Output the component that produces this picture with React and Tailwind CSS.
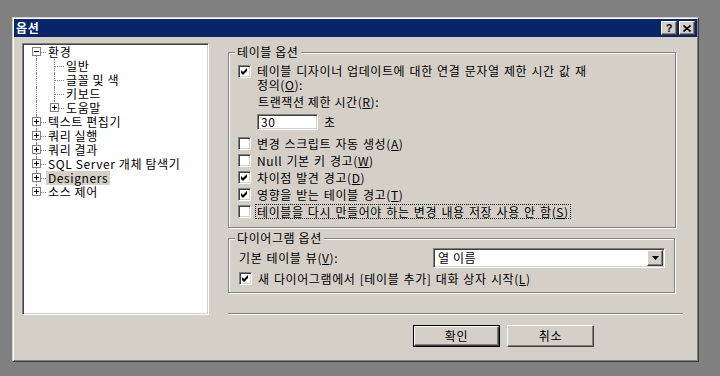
import React from 'react';

const font = "font-['Noto_Sans_CJK_KR','Noto_Sans_CJK_SC',sans-serif]";
const raised =
  'border border-t-white border-l-white border-r-[#404040] border-b-[#404040] shadow-[inset_-1px_-1px_0_#808080]';
const sunken =
  'border border-t-[#808080] border-l-[#808080] border-r-white border-b-white shadow-[inset_1px_1px_0_#404040,inset_-1px_-1px_0_#d4d0c8]';

const tree = [
  { t: '환경', lvl: 0, exp: '-', first: true },
  { t: '일반', lvl: 1 },
  { t: '글꼴 및 색', lvl: 1 },
  { t: '키보드', lvl: 1 },
  { t: '도움말', lvl: 1, exp: '+', lastChild: true },
  { t: '텍스트 편집기', lvl: 0, exp: '+' },
  { t: '쿼리 실행', lvl: 0, exp: '+' },
  { t: '쿼리 결과', lvl: 0, exp: '+' },
  { t: 'SQL Server 개체 탐색기', lvl: 0, exp: '+' },
  { t: 'Designers', lvl: 0, exp: '+', hl: true },
  { t: '소스 제어', lvl: 0, exp: '+', last: true },
];

function U({ children }) {
  return <span className="underline underline-offset-[1px]">{children}</span>;
}

function Expander({ sign, className }) {
  return (
    <div
      className={`absolute top-[2px] w-[9px] h-[9px] border border-[#808080] bg-white flex items-center justify-center ${className}`}
    >
      <svg width="5" height="5" viewBox="0 0 5 5">
        <rect x="0" y="2" width="5" height="1" fill="#000" />
        {sign === '+' && <rect x="2" y="0" width="1" height="5" fill="#000" />}
      </svg>
    </div>
  );
}

function TreeRow({ item }) {
  const { t, lvl, exp, first, last, lastChild, hl } = item;
  const v0 = first ? 'top-[7px] bottom-0' : last ? 'top-0 h-[7px]' : 'top-0 bottom-0';
  return (
    <div className={`relative h-[14px] leading-[14px] whitespace-nowrap ${lvl === 0 ? 'pl-[22px]' : 'pl-[40px]'}`}>
      <div className={`absolute left-[12px] w-0 border-l border-dotted border-[#808080] ${v0}`} />
      {lvl === 1 && (
        <div
          className={`absolute left-[30px] w-0 border-l border-dotted border-[#808080] ${
            lastChild ? 'top-0 h-[7px]' : 'top-0 bottom-0'
          }`}
        />
      )}
      <div
        className={`absolute top-[7px] w-[10px] h-0 border-t border-dotted border-[#808080] ${
          lvl === 0 ? 'left-[12px]' : 'left-[30px]'
        }`}
      />
      {exp && <Expander sign={exp} className={lvl === 0 ? 'left-[8px]' : 'left-[26px]'} />}
      <span className={`relative inline-block px-[2px] ${hl ? 'bg-[#d4d0c8]' : ''}`}>{t}</span>
    </div>
  );
}

function CheckBox({ checked, className = '' }) {
  return (
    <span className={`${sunken} bg-white w-[13px] h-[13px] shrink-0 flex items-center justify-center ${className}`}>
      {checked && (
        <svg width="7" height="7" viewBox="0 0 7 7">
          <path d="M0 2L2 4L6 0V3L2 7L0 5Z" fill="#000" />
        </svg>
      )}
    </span>
  );
}

function CheckRow({ checked, focus, pad = 'pl-[9px]', children }) {
  return (
    <div className={`h-[17px] flex items-center ${pad}`}>
      <CheckBox checked={checked} />
      <span
        className={`ml-[4px] px-[1px] leading-[13px] border ${
          focus ? 'border-dotted border-black' : 'border-transparent'
        }`}
      >
        {children}
      </span>
    </div>
  );
}

function Group({ title, className, children }) {
  return (
    <div className={`border border-[#808080] shadow-[inset_1px_1px_0_#fff,1px_1px_0_#fff] ${className}`}>
      <div className="-mt-[8px] ml-[6px] px-[2px] w-fit bg-[#d4d0c8] leading-[14px]">{title}</div>
      {children}
    </div>
  );
}

export default function App() {
  return (
    <div className={`w-[720px] h-[376px] bg-[#808080] pt-[17px] pl-[12px] text-[12px] tracking-[0.6px] text-black ${font}`}>
      <div className="w-[687px] h-[345px] bg-[#d4d0c8] border border-t-[#d4d0c8] border-l-[#d4d0c8] border-r-[#404040] border-b-[#404040] shadow-[inset_1px_1px_0_#fff,inset_-1px_-1px_0_#808080] p-[1px] flex flex-col">
        {/* title bar */}
        <div className="h-[18px] bg-[#0a246a] flex items-center justify-between pl-[2px] pr-[2px]">
          <span className="text-white font-bold leading-[14px]">옵션</span>
          <div className="flex gap-[2px]">
            <div className={`${raised} bg-[#d4d0c8] w-[16px] h-[14px] flex items-center justify-center`}>
              <span className="font-['Liberation_Sans',sans-serif] font-bold text-[11px] leading-[10px] tracking-normal">?</span>
            </div>
            <div className={`${raised} bg-[#d4d0c8] w-[16px] h-[14px] flex items-center justify-center`}>
              <svg width="8" height="7" viewBox="0 0 8 7">
                <path d="M0.5 0.5L7.5 6.5M7.5 0.5L0.5 6.5" stroke="#000" strokeWidth="1.6" />
              </svg>
            </div>
          </div>
        </div>

        {/* body */}
        <div className="flex">
          <div className={`${sunken} bg-white w-[187px] h-[272px] mt-[6px] ml-[8px] p-[1px]`}>
            {tree.map((item) => (
              <TreeRow key={item.t} item={item} />
            ))}
          </div>

          <div className="w-[455px] ml-[19px] mt-[15px] flex flex-col">
            <Group title="테이블 옵션" className="w-[448px] h-[176px]">
              <div className="mt-[4px] flex items-start pl-[9px]">
                <CheckBox checked className="mt-[2px]" />
                <div className="ml-[4px] px-[1px] border border-transparent leading-[14px] [word-spacing:1px]">
                  <div>테이블 디자이너 업데이트에 대한 연결 문자열 제한 시간 값 재</div>
                  <div>
                    정의(<U>O</U>):
                  </div>
                </div>
              </div>
              <div className="mt-[2px] pl-[29px] leading-[14px]">
                트랜잭션 제한 시간(<U>R</U>):
              </div>
              <div className="mt-[4px] pl-[28px] flex items-center">
                <div className={`${sunken} bg-white w-[61px] h-[16px] flex items-center pl-[3px] leading-[12px]`}>30</div>
                <span className="ml-[6px]">초</span>
              </div>
              <div className="mt-[4px] [word-spacing:1px]">
                <CheckRow>
                  변경 스크립트 자동 생성(<U>A</U>)
                </CheckRow>
                <CheckRow>
                  Null 기본 키 경고(<U>W</U>)
                </CheckRow>
                <CheckRow checked>
                  차이점 발견 경고(<U>D</U>)
                </CheckRow>
                <CheckRow checked>
                  영향을 받는 테이블 경고(<U>T</U>)
                </CheckRow>
                <CheckRow focus>
                  테이블을 다시 만들어야 하는 변경 내용 저장 사용 안 함(<U>S</U>)
                </CheckRow>
              </div>
            </Group>

            <Group title="다이어그램 옵션" className="w-[447px] h-[55px] mt-[10px]">
              <div className="mt-[3px] flex items-center pl-[10px]">
                <span className="[word-spacing:1px]">
                  기본 테이블 뷰(<U>V</U>):
                </span>
                <div className={`${sunken} bg-white w-[232px] h-[20px] ml-auto mr-[9px] p-[1px] flex items-center`}>
                  <span className="flex-1 pl-[3px] leading-[14px]">열 이름</span>
                  <div className={`${raised} bg-[#d4d0c8] w-[16px] h-[16px] flex items-center justify-center`}>
                    <svg width="7" height="4" viewBox="0 0 7 4">
                      <path d="M0 0H7L3.5 4Z" fill="#000" />
                    </svg>
                  </div>
                </div>
              </div>
              <div className="mt-[2px] [word-spacing:1px]">
                <CheckRow checked pad="pl-[10px]">
                  새 다이어그램에서 [테이블 추가] 대화 상자 시작(<U>L</U>)
                </CheckRow>
              </div>
            </Group>

            <div className="mt-[20px] w-[455px] h-[2px] border-t border-b border-t-[#808080] border-b-white" />

            <div className="mt-[10px] ml-[185px] flex gap-[7px]">
              <div className="w-[87px] h-[22px] border border-black flex">
                <div className={`${raised} bg-[#d4d0c8] flex-1 flex items-center justify-center`}>확인</div>
              </div>
              <div className={`${raised} bg-[#d4d0c8] w-[87px] h-[22px] flex items-center justify-center`}>취소</div>
            </div>
          </div>
        </div>
      </div>
    </div>
  );
}
